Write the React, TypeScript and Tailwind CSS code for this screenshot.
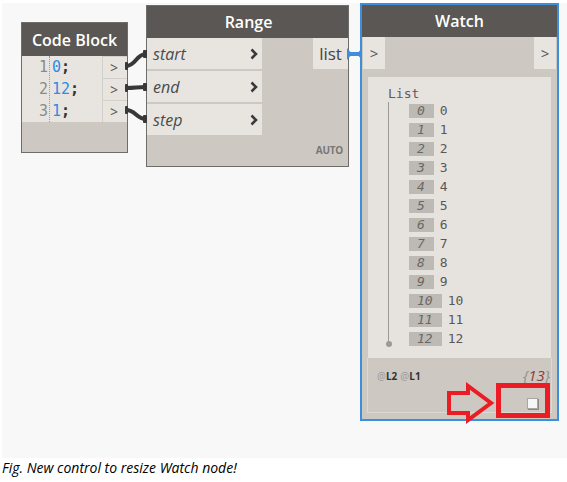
const mono = "font-['DejaVu_Sans_Mono','Liberation_Mono',monospace]";
const sans = "font-['Open_Sans','Noto_Sans',sans-serif]";

function Wires() {
  return (
    <svg className="absolute left-0 top-0 pointer-events-none" width="565" height="455">
      <g stroke="#383838" strokeWidth="4" fill="none" strokeLinecap="butt">
        <path d="M124 63 C134 63 134 51 144 51" />
        <path d="M124 85 C134 85 134 84 144 84" />
        <path d="M124 107 C134 107 134 116 144 116" />
      </g>
      <g fill="#383838">
        <rect x="141" y="47" width="4" height="8" rx="1" />
        <rect x="141" y="80" width="4" height="8" rx="1" />
        <rect x="141" y="112" width="4" height="8" rx="1" />
        <rect x="123" y="59" width="3" height="8" rx="1" />
        <rect x="123" y="81" width="3" height="8" rx="1" />
        <rect x="123" y="103" width="3" height="8" rx="1" />
      </g>
      <path d="M346 51 L359 51" stroke="#3d8fdb" strokeWidth="4" />
      <path d="M345 45 L350 51 L345 57 Z" fill="#3d8fdb" />
      <path d="M360 45 L355 51 L360 57 Z" fill="#3d8fdb" />
    </svg>
  );
}

function CodeBlock() {
  const lines = [
    { n: "1", v: "0" },
    { n: "2", v: "12" },
    { n: "3", v: "1" },
  ];
  return (
    <div className="absolute left-[19px] top-[19px] w-[107px] h-[131px] border border-[#6f6d6a] bg-[#cdc9c2] flex flex-col">
      <div className={`h-[33px] bg-[#5a5754] flex items-center justify-center text-white text-[16px] font-semibold ${sans}`}>
        Code Block
      </div>
      <div className="flex">
        <div className={`w-[80px] bg-[#e8e5e0] flex ${mono} text-[15px]`}>
          <div className="w-[28px] flex flex-col items-end pr-[1px] border-r border-dotted border-[#9a9a9a] text-[#8a8a8a]">
            {lines.map((l) => (
              <div key={l.n} className="h-[22px] leading-[22px]">{l.n}</div>
            ))}
          </div>
          <div className="flex flex-col pl-[2px]">
            {lines.map((l) => (
              <div key={l.n} className="h-[22px] leading-[22px]">
                <span className="text-[#2e8be6]">{l.v}</span>
                <span className="text-[#333] font-bold">;</span>
              </div>
            ))}
          </div>
        </div>
        <div className="w-[25px] flex flex-col">
          {lines.map((l) => (
            <div
              key={l.n}
              className={`h-[22px] bg-[#e8e5e0] border-l border-t border-[#d3cfc9] flex items-center justify-center pr-[2px] text-[14px] text-[#555] ${sans}`}
            >
              &gt;
            </div>
          ))}
        </div>
      </div>
    </div>
  );
}

function RangeNode() {
  const inputs = ["start", "end", "step"];
  return (
    <div className="absolute left-[144px] top-[2px] w-[203px] h-[162px] border border-[#6f6d6a] bg-[#cdc9c2] flex flex-col">
      <div className={`h-[32px] bg-[#5a5754] flex items-center justify-center text-white text-[16px] font-semibold ${sans}`}>
        <span className="ml-[2px]">Range</span>
      </div>
      <div className="flex flex-1 justify-between">
        <div className="w-[115px] flex flex-col gap-[2px]">
          {inputs.map((name) => (
            <div
              key={name}
              className={`h-[31px] bg-[#e8e5e0] flex items-center justify-between pl-[6px] pr-[4px] ${sans}`}
            >
              <span className="italic text-[16px] text-[#4a4a4a]">{name}</span>
              <svg width="8" height="12" viewBox="0 0 8 12">
                <path d="M1.5 1.5 L6 6 L1.5 10.5" stroke="#3a3a3a" strokeWidth="2.6" fill="none" />
              </svg>
            </div>
          ))}
        </div>
        <div className="flex flex-col items-end justify-between">
          <div className={`h-[31px] w-[35px] bg-[#e8e5e0] flex items-center justify-center text-[17px] text-[#444] ${sans}`}>
            list
          </div>
          <div className={`pr-[5px] pb-[8px] text-[10px] font-bold text-[#777] tracking-tight ${sans}`}>AUTO</div>
        </div>
      </div>
    </div>
  );
}

function WatchNode() {
  const items = Array.from({ length: 13 }, (_, i) => i);
  return (
    <div className="absolute left-[358px] top-[0px] w-[199px] h-[418px] border-2 border-[#3d8fdb] bg-[#cdc9c2] flex flex-col">
      <div className={`h-[32px] shrink-0 bg-[#5a5754] flex items-center justify-center text-white text-[16px] font-semibold ${sans}`}>
        Watch
      </div>
      <div className={`h-[32px] shrink-0 flex justify-between px-[1px] text-[15px] text-[#555] ${sans}`}>
        <div className="w-[22px] bg-[#e8e5e0] flex items-center justify-center">&gt;</div>
        <div className="w-[22px] bg-[#e8e5e0] flex items-center justify-center">&gt;</div>
      </div>
      <div className="mx-[6px] mt-[8px] h-[281px] bg-[#e6e3de] flex flex-col pl-[20px] pt-[9px]">
        <div className={`${mono} text-[13px] leading-[15px] text-[#5d5a6a]`}>List</div>
        <div className="relative flex flex-col pl-[21px]">
          <div className="absolute left-[0px] top-[1px] w-px h-[241px] bg-[#9d9a96]" />
          <div className="absolute left-[-2.5px] top-[240px] w-[6px] h-[6px] rounded-full bg-[#9d9a96]" />
          {items.map((i) => (
            <div key={i} className={`h-[19px] flex items-center ${mono} text-[13px]`}>
              <span className="h-[14px] leading-[14px] bg-[#bdbab5] text-[#6a6865] italic pl-[8px] pr-[9px]">{i}</span>
              <span className="ml-[6px] text-[#5a5856]">{i}</span>
            </div>
          ))}
        </div>
      </div>
      <div className="mx-[5px] h-[55px] border-l border-r border-b border-[#dcd8d2] flex flex-col px-[4px]">
        <div className="flex justify-between items-start">
          <div className={`${sans} mt-[11px] ml-[5px] text-[10px] flex gap-[3px]`}>
            <span>
              <span className="text-[#999]">@</span>
              <span className="font-bold text-[#333]">L2</span>
            </span>
            <span>
              <span className="text-[#999]">@</span>
              <span className="font-bold text-[#333]">L1</span>
            </span>
          </div>
          <div className={`${sans} italic text-[15px] mt-[6px] mr-[-3px]`}>
            <span className="text-[#8f8f8f]">{"{"}</span>
            <span className="text-[#8a3c3c]">13</span>
            <span className="text-[#8f8f8f]">{"}"}</span>
          </div>
        </div>
        <div className="flex justify-end mt-[11px] mr-[9px]">
          <div className="w-[11px] h-[11px] bg-[#f6f6f6] border border-[#a9a6a1] shadow-[1px_1px_0_#8d8a86]" />
        </div>
      </div>
    </div>
  );
}

function Callout() {
  return (
    <>
      <svg className="absolute left-0 top-0 pointer-events-none" width="565" height="455">
        <path
          d="M447 390 L466 390 L466 383 L489 400 L466 417 L466 410 L447 410 Z"
          stroke="#ec1c24"
          strokeWidth="4"
          fill="none"
          strokeLinejoin="miter"
        />
      </svg>
      <div className="absolute left-[494px] top-[380px] w-[54px] h-[35px] border-[5px] border-[#ec1c24]" />
    </>
  );
}

export default function App() {
  return (
    <div className="w-[567px] h-[482px] bg-white overflow-hidden">
      <div className="relative ml-[2px] pt-0 mt-[3px] h-[455px] w-[565px] bg-[#f8f8f8]">
        <CodeBlock />
        <RangeNode />
        <WatchNode />
        <Wires />
        <Callout />
      </div>
      <p className="ml-[2px] mt-[0px] text-[14px] leading-[19px] italic text-black font-['Open_Sans','Noto_Sans',sans-serif]">
        Fig. New control to resize Watch node!
      </p>
    </div>
  );
}
